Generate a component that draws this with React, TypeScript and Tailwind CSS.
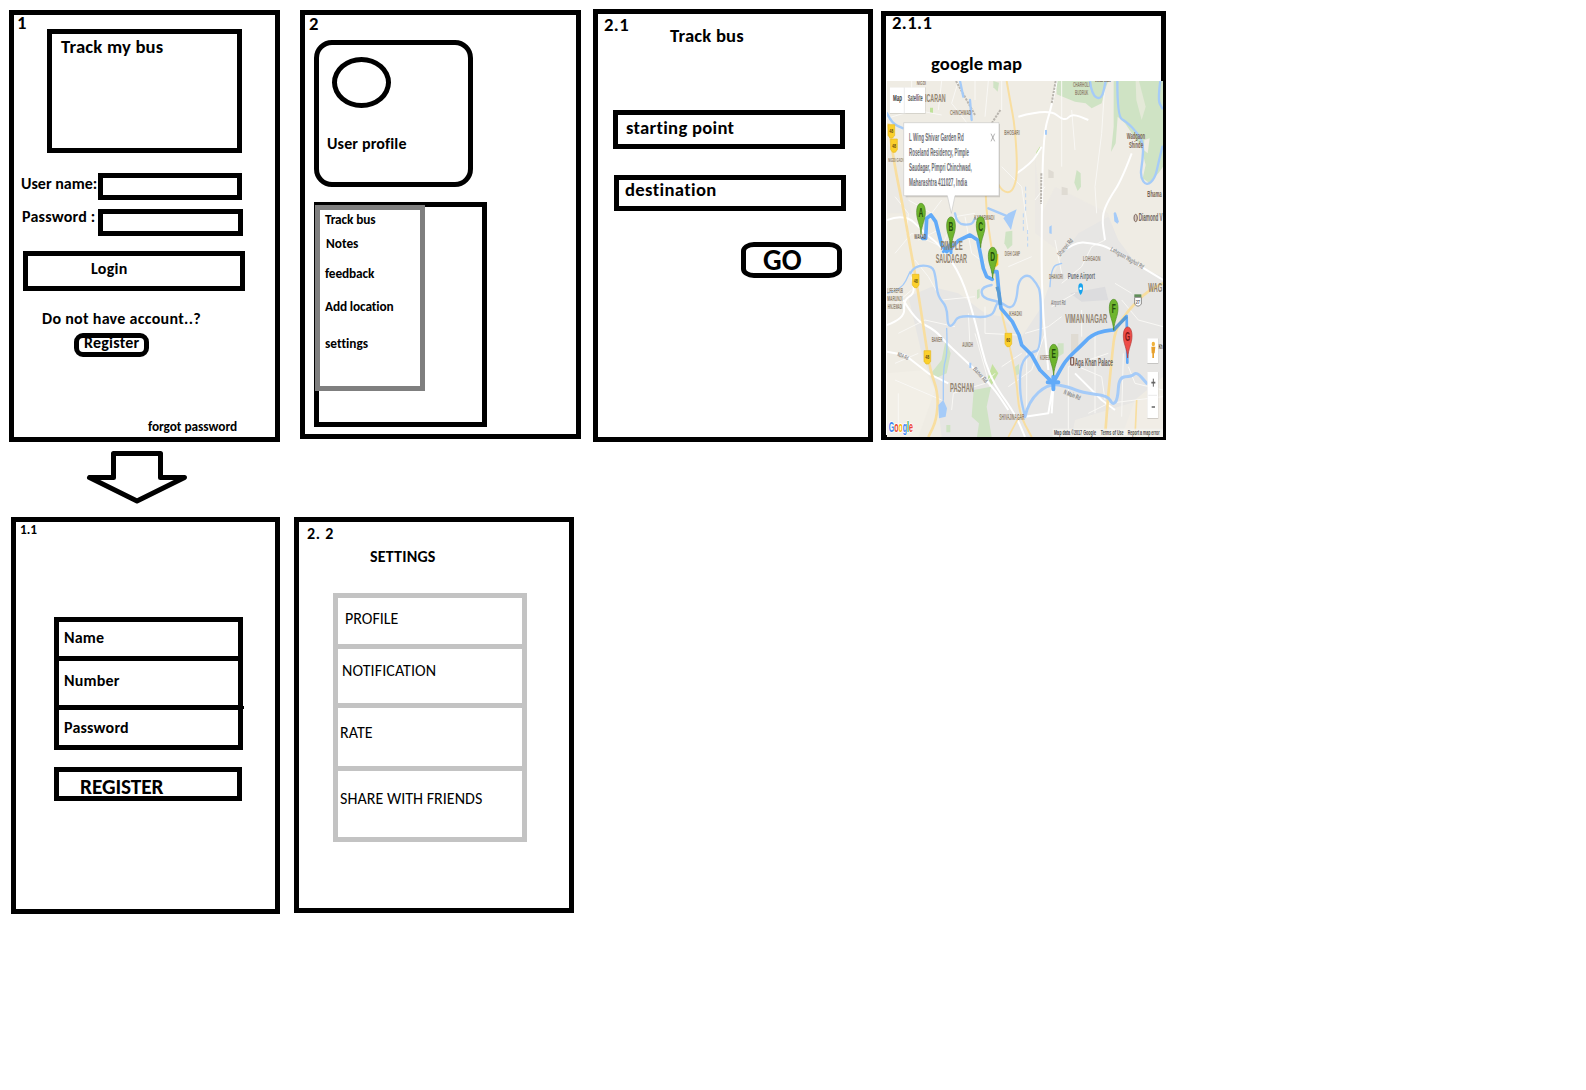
import type { ReactNode } from 'react';

function Label({ children, className }: { children: ReactNode; className: string }) {
  return <div className={`h-5 whitespace-pre leading-5 ${className}`}>{children}</div>;
}

function MapText({ x, y, w, s = 24, fill = '#91836f', children }: { x: number; y: number; w: number; s?: number; fill?: string; children: string }) {
  return (
    <text x={x} y={y} fontSize={s} fill={fill} textLength={w} lengthAdjust="spacingAndGlyphs">
      {children}
    </text>
  );
}

// Turns straight "M x y L x y ..." runs into rounded curves through the segment midpoints.
function curve(d: string) {
  return d
    .split('M')
    .filter((run) => run.trim())
    .map((run) => {
      const pts = run.split('L').map((p) => p.trim().split(/\s+/).map(Number));
      let out = `M${pts[0][0]} ${pts[0][1]}`;
      for (let i = 1; i < pts.length - 1; i++) {
        const [x, y] = pts[i];
        const [nx, ny] = pts[i + 1];
        out += `Q${x} ${y} ${(x + nx) / 2} ${(y + ny) / 2}`;
      }
      const last = pts[pts.length - 1];
      return `${out}L${last[0]} ${last[1]}`;
    })
    .join('');
}

function Pin({ x, y, letter, red }: { x: number; y: number; letter: string; red?: boolean }) {
  return (
    <g transform={`translate(${x} ${y})`}>
      <path
        d="M0 0 C-2 -30 -13 -42 -13 -66 C-13 -84 -7 -93 0 -93 C7 -93 13 -84 13 -66 C13 -42 2 -30 0 0Z"
        fill={red ? '#ee4d48' : '#6fb52e'}
        stroke={red ? '#b23a36' : '#4c8a20'}
        strokeWidth={2}
      />
      <text x={0} y={-51} fontSize={36} textAnchor="middle" fill={red ? '#7c1512' : '#234d0c'} transform="scale(0.55 1)">
        {letter}
      </text>
    </g>
  );
}

function Shield({ x, y, text }: { x: number; y: number; text: string }) {
  return (
    <g>
      <path d={`M${x - 10} ${y - 20}h20v32l-6 8h-8l-6 -8z`} fill="#fbd02c" stroke="#e6b820" strokeWidth={2} />
      <MapText x={x - 6} y={y + 6} w={12} s={17} fill="#5c4a10">{text}</MapText>
    </g>
  );
}

function RouteMap() {
  return (
    <svg className="block h-[356px] w-[276px] shrink-0" viewBox="36 243 828 1068" preserveAspectRatio="none" fontFamily="Liberation Sans, Arial, sans-serif">
      <rect x={36} y={243} width={828} height={1068} fill="#efece4" />

      {/* built-up areas */}
      <g fill="#e7e6e4">
        <path d="M100 890 L170 860 L250 880 L330 940 L380 950 L440 1010 L500 920 L525 850 L560 770 L610 700 L700 650 L730 720 L790 800 L864 830 L864 1130 L780 1200 L740 1311 L200 1311 L185 1180 L140 1060Z" />
        <path d="M480 470 L500 640 L540 560 L700 640 L720 700 L560 760 L480 700Z" opacity={0.35} />
        <path d="M36 430 L80 500 L110 640 L36 640Z" opacity={0.5} />
      </g>
      <g fill="#f2efe7">
        <path d="M36 1120 L150 1110 L180 1170 L130 1311 L36 1311Z" />
        <path d="M600 1260 L864 1180 L864 1311 L590 1311Z" opacity={0.6} />
      </g>

      {/* parks */}
      <g fill="#cfe3c4">
        <path d="M545 243 L700 243 L690 270 L680 310 L650 325 L632 310 L600 305 L545 283Z" />
        <path d="M716 243 L864 243 L864 500 L850 520 L822 548 L803 535 L812 495 L798 440 L750 370 L728 350 L722 430 L708 456 L716 380Z" />
        <path d="M605 510 L617 520 L618 560 L608 573 L598 548Z" />
        <path d="M212 1020 L227 1060 L215 1120 L185 1133 L168 1120 L200 1080Z" />
        <path d="M296 1170 L348 1160 L335 1220 L350 1311 L306 1311 L312 1270 L290 1250Z" />
        <path d="M352 1092 L370 1120 L350 1155 L338 1135Z" fill="#c5e2a0" />
        <path d="M392 695 L412 692 L412 735 L398 748 L388 730Z" />
        <path d="M548 1030h18v30l-18 12z" />
        <path d="M355 243 L372 248 L368 275 L355 262Z" />
        <path d="M420 1100l12 -8v30l-12 6z M214 1275h12v22h-12z M306 870l8 -4v26l-8 6z" />
        <path d="M165 323h9v16h-9z M484 456l12 -18v12l-12 22z" fill="#bfe19a" />
      </g>
      <path d="M782 243 L792 243 L812 320 L800 360 L784 300Z" fill="#e4e9d8" />
      <path d="M808 420 L824 415 L818 460 L806 450Z" fill="#efece4" />
      <path d="M588 1002h22v48l-22 10z M520 508l16 8v18h-16z M560 560l18 5v20h-18z" fill="#dfdbd3" />
      <path d="M585 880 L690 860 L700 900 L620 905Z" fill="#dcdcde" />

      {/* minor streets */}
      <g fill="none" stroke="#f9f8f5" strokeWidth={3}>
        <path d="M110 243V330 M200 243L190 330 M36 355L120 330L200 345 M250 243L230 310L300 400 M300 243V300 M340 243L330 350" />
        <path d="M60 760L110 700L200 740L240 650L300 640 M120 780L160 830L200 900L300 890 M40 930L110 870 M70 1000L150 960L240 980" />
        <path d="M230 1230L235 1180L330 1150L360 1120 M280 940L285 1040 M330 920V1000L430 1005 M300 1000L345 1160" />
        <path d="M450 1000L520 980L560 950 M530 920L600 880 M580 1311V1100L700 1060 M640 1240L700 1210L864 1190 M610 1100L680 1130L690 1200" />
        <path d="M400 1160L470 1110L510 1000 M380 1100L440 1060 M740 900L790 960L864 980 M720 850L770 880 M760 1100L780 1150L864 1170" />
        <path d="M560 243V500 M690 243L680 400L660 560L665 640 M590 330L600 450 M480 600L510 560 M540 720L560 820 M650 740L620 800L560 850" />
        <path d="M380 500L440 560L460 700 M400 800L470 770 M690 720L650 740 M60 1140L200 1200 M70 1180V1300 M130 1060L60 1090" />
        <path d="M380 243V330 M60 590L100 640L95 700 M270 650L290 760L330 790 M130 720L190 690 M100 600L170 640L200 600 M455 1060V1230 M620 930V1010 M660 1000V1240 M745 1060L740 1250" />
      </g>

      {/* main roads */}
      <g fill="none" stroke="#ffffff" strokeWidth={6} strokeLinejoin="round">
        <path d={curve('M36 660 L90 640 L150 700 L200 740 L260 830 L300 960 L340 1130 L420 1240 L450 1311')} />
        <path d={curve('M36 975 L90 955 L85 900 L120 880 L110 830 M85 900 L120 960 L180 990 L215 1030 L280 1090 L350 1155 L400 1230')} />
        <path d="M36 1055L90 1065L160 1120L220 1150" />
        <path d={curve('M545 243 L530 320 L505 400 L500 650 L500 900 L520 1110')} />
        <path d={curve('M425 520 L470 490 L500 440 M430 350 L520 325 L570 365 L590 340 L640 360')} />
        <path d={curve('M770 460 L740 540 L700 600 L680 650 L690 720')} />
        <path d={curve('M555 760 L600 725 L650 730 L700 740 L864 840')} />
        <path d="M450 1250L520 1240L535 1150 M535 1160L530 1240 M600 1120L680 1200L720 1230" />
      </g>
      <g fill="none" stroke="#b9b5ae" strokeWidth={6} strokeDasharray="7 3">
        <path d={curve('M243 243 L300 345 M376 330 L350 370 M542 243 L530 310 M499 520 L498 612')} />
      </g>

      {/* highways */}
      <g fill="none" stroke="#f8dea0" strokeWidth={8} strokeLinejoin="round">
        <path d={curve('M40 370 L55 480 L90 650 L105 740 L122 830 L150 1010 L165 1110 L190 1180 L185 1260 L160 1311')} />
        <path d={curve('M395 243 L405 300 L420 380 L428 520 L415 570 L395 580 L370 560 L335 470 L330 610 L355 780 L375 920 L400 1020 L425 1140 L432 1240 L470 1311')} strokeWidth={6} />
        <path d={curve('M864 850 L820 870 L760 930 L720 990 L712 1060 L700 1180 L690 1311')} />
        <path d="M785 1200L780 1311 M432 1250L400 1311" strokeWidth={5} />
      </g>

      {/* rivers and lakes */}
      <g fill="none" stroke="#a5cbf8" strokeWidth={7} strokeLinejoin="round" strokeLinecap="round">
        <path d={curve('M36 340 L50 370 L85 385 M285 300 L290 360 M255 243 L265 290')} />
        <path d={curve('M106 820 L118 797 L172 797 L182 830 L188 890 L216 920 L218 980 L235 975 L250 945 L350 955 L365 910 L375 905')} />
        <path d={curve('M350 855 L318 860 L322 895 L375 905 L408 928 L425 900 L430 840 L460 822 L485 850 L498 880 L497 1050 L470 1056 L436 1090 L434 1180 L450 1250')} />
        <path d={curve('M450 1250 L460 1205 L520 1150 L580 1160 L620 1178 L700 1187 L712 1215 L728 1200 L732 1130 L770 1130 L785 1115 L815 1150')} strokeWidth={9} />
        <path d={curve('M645 243 L650 285 L680 300 L692 243')} />
        <path d={curve('M727 243 L727 350 L755 365 L788 400 L805 430 L803 480 L795 530 L815 558 L840 535 L850 490 L862 440 M856 243 L848 300 L862 325')} />
        <path d={curve('M240 640 L245 672 L290 675 L300 655 M340 625 L400 650 M720 640 L728 665')} />
        <path d={curve('M215 985 L218 1060 L205 1100 L205 1200 M36 880 L80 870 L105 815 M525 860 L528 800 L560 790')} strokeWidth={4} />
      </g>
      <path d="M452 560V640 M458 690V740 M445 640V700" stroke="#b8d4f5" strokeWidth={3} strokeDasharray="12 8" />
      <g fill="#a5cbf8">
        <path d="M190 1215L205 1200L216 1225L212 1250L192 1255Z" />
        <path d="M385 655L400 640L425 628L415 660L408 690L395 670Z" />
        <path d="M523 680l7 -4v26l-7 -2z M510 390h6v14h-6z M716 640l12 14v18l-10 -8z M283 1088h6v16h-6z" />
      </g>

      {/* route */}
      <g fill="none" stroke="#61aaf8" strokeLinejoin="round" strokeLinecap="round">
        <path d="M142 715L152 715L155 655L168 645L182 665L200 735L215 755L228 745L250 722L285 705L308 720L317 765L325 805L335 830L352 838 M354 815L366 815L372 880L378 925L412 965L432 1005L440 1035L470 1065L495 1110L535 1150" strokeWidth={11} />
        <path d="M205 755L222 735M228 725V758" strokeWidth={9} />
        <path d={curve('M535 1148 L555 1110 L575 1078 L615 1040 L650 1005 L690 992 L716 990')} strokeWidth={11} />
        <path d="M716 990L735 970L755 948L757 1088" strokeWidth={8} />
        <path d="M535 1130V1168 M518 1147H550" strokeWidth={12} />
      </g>
      <path d="M716 990L735 970L755 950 M366 860L372 880L376 915" fill="none" stroke="#5a9bd3" strokeWidth={10} />

      {/* place names */}
      <MapText x={150} y={305} w={62} s={34}>ICARAN</MapText>
      <MapText x={125} y={254} w={28} s={15}>NIGDI</MapText>
      <MapText x={225} y={346} w={64}>CHINCHWAD</MapText>
      <MapText x={388} y={405} w={46}>BHOSARI</MapText>
      <MapText x={594} y={261} w={50} s={20}>CHARHOLI</MapText>
      <MapText x={600} y={284} w={40} s={20}>BUDRUK</MapText>
      <MapText x={660} y={247} w={48} s={15} fill="#6f5f50">Markal</MapText>
      <MapText x={755} y={417} w={55} s={29} fill="#75604f">Wadgaon</MapText>
      <MapText x={762} y={445} w={42} s={27} fill="#75604f">Shinde</MapText>
      <MapText x={817} y={592} w={43} s={28} fill="#75604f">Bhama</MapText>
      <MapText x={791} y={664} w={72} s={32} fill="#6e6660">Diamond V</MapText>
      <ellipse cx={782} cy={654} rx={5} ry={11} fill="#d9cbc4" stroke="#7a655a" strokeWidth={3} />
      <MapText x={40} y={486} w={48} s={16}>NIGDI GAON</MapText>
      <MapText x={298} y={660} w={60} s={22}>KASARWADI</MapText>
      <MapText x={118} y={717} w={36} s={20} fill="#6d6255">WAKAD</MapText>
      <MapText x={197} y={750} w={66} s={36}>PIMPLE</MapText>
      <MapText x={182} y={788} w={94} s={36}>SAUDAGAR</MapText>
      <MapText x={389} y={769} w={46} s={22}>DIGHI CAMP</MapText>
      <MapText x={37} y={880} w={47} s={22}>LIFE REPUB</MapText>
      <MapText x={37} y={903} w={45} s={22}>MARUNJI</MapText>
      <MapText x={38} y={926} w={44} s={22}>HINJEWADI</MapText>
      <MapText x={624} y={782} w={52} s={22}>LOHGAON</MapText>
      <MapText x={522} y={838} w={42} s={20}>DHANORI</MapText>
      <MapText x={578} y={836} w={82} s={28} fill="#6b6f76">Pune Airport</MapText>
      <MapText x={820} y={877} w={42} s={36}>WAG</MapText>
      <MapText x={403} y={947} w={38} s={19}>KHADKI</MapText>
      <MapText x={571} y={969} w={126} s={37}>VIMAN NAGAR</MapText>
      <MapText x={170} y={1027} w={32} s={21}>BANER</MapText>
      <MapText x={262} y={1040} w={32} s={21}>AUNDH</MapText>
      <MapText x={225} y={1175} w={72} s={36}>PASHAN</MapText>
      <MapText x={495} y={1081} w={30} s={20}>KOREG</MapText>
      <MapText x={599} y={1098} w={115} s={32} fill="#6e6660">Aga Khan Palace</MapText>
      <rect x={587} y={1073} width={9} height={22} rx={2} fill="none" stroke="#86635b" strokeWidth={4} />
      <MapText x={373} y={1260} w={75} s={25}>SHIVAJINAGAR</MapText>
      <MapText x={528} y={916} w={44} s={19} fill="#888888">Airport Rd</MapText>
      <g transform="rotate(22 68 1062)"><MapText x={68} y={1068} w={34} s={18} fill="#888888">NDA Rd</MapText></g>
      <g transform="rotate(48 298 1104)"><MapText x={298} y={1110} w={56} s={18} fill="#888888">Baner Rd</MapText></g>
      <g transform="rotate(-50 556 770)"><MapText x={556} y={770} w={62} s={20} fill="#888888">Dhanori Rd</MapText></g>
      <g transform="rotate(30 708 746)"><MapText x={708} y={752} w={112} s={19} fill="#888888">Lohegaon Wagholi Rd</MapText></g>
      <g transform="rotate(22 568 1174)"><MapText x={568} y={1182} w={52} s={20} fill="#888888">N Main Rd</MapText></g>

      <Shield x={49} y={394} text="48" />
      <Shield x={57} y={437} text="48" />
      <Shield x={122} y={843} text="48" />
      <Shield x={157} y={1072} text="48" />
      <Shield x={400} y={1020} text="60" />
      <path d="M358 762h12v32l-6 6h-6z" fill="#fbd02c" />
      <rect x={778} y={883} width={21} height={8} fill="#5e8d57" />
      <path d="M779 892h20v20l-6 6h-8l-6 -6z" fill="#ffffff" stroke="#8b8b88" strokeWidth={3} />
      <MapText x={782} y={911} w={13} s={17} fill="#666666">27</MapText>
      <path d="M617 885 C610 877 610 866 610 862 Q610 850 617 850 Q624 850 624 862 C624 868 624 877 617 885Z" fill="#18a4ee" />
      <circle cx={617} cy={866} r={4} fill="#ffffff" />

      {/* address bubble */}
      <path d="M87 372H375V592H92Z" fill="#000000" opacity={0.14} />
      <path d="M86 368H372V587H240L229 640L217 587H86Z" fill="#ffffff" stroke="#c9c9c7" strokeWidth={2} />
      <MapText x={102} y={423} w={164} s={30} fill="#6d6e74">L Wing Shivar Garden Rd</MapText>
      <MapText x={102} y={467} w={180} s={30} fill="#6d6e74">Roseland Residency, Pimple</MapText>
      <MapText x={102} y={512} w={188} s={30} fill="#6d6e74">Saudagar, Pimpri Chinchwad,</MapText>
      <MapText x={102} y={557} w={174} s={30} fill="#6d6e74">Maharashtra 411027, India</MapText>
      <path d="M348 401L359 424M359 401L348 424" stroke="#8a8a8a" strokeWidth={2} />

      {/* map type switch */}
      <rect x={44} y={262} width={108} height={80} fill="#000000" opacity={0.1} />
      <rect x={44} y={262} width={106} height={77} fill="#ffffff" />
      <path d="M88 262V339" stroke="#e2e2e2" strokeWidth={2} />
      <text x={54} y={304} fontSize={25} fontWeight={700} fill="#333333" textLength={27} lengthAdjust="spacingAndGlyphs">Map</text>
      <MapText x={98} y={304} w={45} s={25} fill="#555555">Satellite</MapText>

      <Pin x={138} y={703} letter="A" />
      <Pin x={228} y={744} letter="B" />
      <Pin x={317} y={743} letter="C" />
      <Pin x={353} y={835} letter="D" />
      <Pin x={536} y={1126} letter="E" />
      <Pin x={716} y={991} letter="F" />
      <Pin x={758} y={1074} letter="G" red />

      {/* street view and zoom controls */}
      <rect x={817} y={1016} width={33} height={76} fill="#000000" opacity={0.14} />
      <rect x={817} y={1015} width={32} height={74} fill="#ffffff" />
      <ellipse cx={835} cy={1032} rx={5} ry={7} fill="#f0b23c" />
      <path d="M829 1040h12l-2 20h-2v14h-5v-14h-2z" fill="#e7a02c" />
      <MapText x={851} y={1048} w={12} s={20} fill="#54452f">Kh</MapText>
      <rect x={817} y={1117} width={33} height={140} fill="#000000" opacity={0.14} />
      <rect x={817} y={1116} width={32} height={138} fill="#ffffff" />
      <path d="M820 1186h26" stroke="#e0e0e0" strokeWidth={2} />
      <path d="M829 1148h12M830 1221h10" stroke="#666666" strokeWidth={5} />
      <path d="M835 1136v24" stroke="#666666" strokeWidth={3} />

      {/* attribution */}
      <rect x={533} y={1286} width={331} height={25} fill="#f4f3ef" opacity={0.75} />
      <MapText x={537} y={1306} w={126} s={22} fill="#4c4c4c">Map data ©2017 Google</MapText>
      <MapText x={677} y={1306} w={69} s={22} fill="#4c4c4c">Terms of Use</MapText>
      <MapText x={758} y={1306} w={96} s={22} fill="#4c4c4c">Report a map error</MapText>
      <text x={41} y={1297} fontSize={42} fontWeight={700} stroke="#ffffff" strokeWidth={4} paintOrder="stroke" textLength={73} lengthAdjust="spacingAndGlyphs">
        <tspan fill="#4285f4">G</tspan>
        <tspan fill="#ea4335">o</tspan>
        <tspan fill="#fbbc05">o</tspan>
        <tspan fill="#4285f4">g</tspan>
        <tspan fill="#34a853">l</tspan>
        <tspan fill="#ea4335">e</tspan>
      </text>
    </svg>
  );
}

function LoginScreen() {
  return (
    <section className="mt-px flex h-[432px] w-[271px] flex-col border-[5px] border-black">
      <div className="flex pl-[3px]">
        <Label className="-mt-0.5 w-[30px] text-[18.67px]">1</Label>
        <div className="mt-[14px] h-[124px] w-[195px] border-[5px] border-black pt-[3px] pl-[9px]">
          <Label className="text-[18.67px] tracking-[0.2px]">Track my bus</Label>
        </div>
      </div>
      <div className="mt-5 flex h-[27px] pl-[7px]">
        <Label className="mt-px w-[77px] text-[16px]">User name:</Label>
        <div className="w-[144px] border-[5px] border-black" />
      </div>
      <div className="mt-[9px] flex h-[27px] pl-[7px]">
        <Label className="-mt-0.5 w-[77px] pl-px text-[16px] tracking-[0.22px]">Password :</Label>
        <div className="w-[145px] border-[5px] border-black" />
      </div>
      <div className="mt-[15px] ml-[9px] h-10 w-[222px] border-[5px] border-black pt-[3px] pl-[63px]">
        <Label className="text-[16px] tracking-[0.3px]">Login</Label>
      </div>
      <Label className="mt-[18px] pl-7 text-[16px] tracking-[0.3px]">Do not have account..?</Label>
      <div className="mt-1 ml-[60px] h-6 w-[75px] rounded-[9px] border-[5px] border-black pl-[5px]">
        <Label className="-mt-[5px] text-[16px] tracking-[0.22px]">Register</Label>
      </div>
      <Label className="mt-[60px] pl-[134px] text-[13.33px] tracking-[-0.05px]">forgot password</Label>
    </section>
  );
}

function ProfileScreen() {
  return (
    <section className="mt-px ml-5 flex h-[429px] w-[281px] flex-col border-[5px] border-black">
      <Label className="-mt-px pl-1 text-[18.67px]">2</Label>
      <div className="mt-1.5 ml-[9px] h-[147px] w-[159px] shrink-0 rounded-[18px] border-[5px] border-black">
        <div className="mt-3 ml-[13px] h-[51px] w-[59px] rounded-[50%] border-[5px] border-black" />
        <Label className="mt-[26px] pl-2 text-[16px] tracking-[0.15px]">User profile</Label>
      </div>
      <div className="mt-[15px] ml-[9px] h-[225px] w-[173px] shrink-0 border-[5px] border-black">
        <div className="-mt-0.5 -ml-1 flex h-[186px] w-[110px] flex-col border-[5px] border-[#7f7f7f] bg-white pl-[5px] text-[13.33px] tracking-[-0.13px]">
          <Label className="">Track bus</Label>
          <Label className="mt-1 pl-px tracking-normal">Notes</Label>
          <Label className="mt-[10px]">feedback</Label>
          <Label className="mt-[13px]">Add location</Label>
          <Label className="mt-[17px] tracking-normal">settings</Label>
        </div>
      </div>
    </section>
  );
}

function TrackBusScreen() {
  return (
    <section className="ml-3 flex h-[433px] w-[280px] flex-col border-[5px] border-black">
      <div className="flex pl-1.5">
        <Label className="mt-px w-[66px] text-[18.67px] tracking-[0.4px]">2.1</Label>
        <Label className="mt-3 text-[18.67px] tracking-[0.2px]">Track bus</Label>
      </div>
      <div className="mt-16 ml-[15px] h-[39px] w-[232px] border-[5px] border-black pt-[3px] pl-2">
        <Label className="text-[18.67px] tracking-[0.28px]">starting point</Label>
      </div>
      <div className="mt-[26px] ml-4 h-9 w-[232px] border-[5px] border-black pl-1.5">
        <Label className="text-[18.67px] tracking-[0.35px]">destination</Label>
      </div>
      <div className="mt-[31px] ml-[143px] h-9 w-[101px] rounded-[13px/9px] border-[5px] border-black pl-[17px]">
        <div className="-mt-0.5 h-[30px] text-[29.33px] leading-[30px]">GO</div>
      </div>
    </section>
  );
}

function MapScreen() {
  return (
    <section className="mt-0.5 ml-2 flex h-[429px] w-[285px] flex-col border-[5px] border-black">
      <Label className="-mt-[3px] pl-1.5 text-[18.67px] tracking-[0.4px]">2.1.1</Label>
      <Label className="mt-[21px] pl-[45px] text-[18.67px] tracking-[0.1px]">google map</Label>
      <div className="mt-[7px] ml-px w-[276px]">
        <RouteMap />
      </div>
    </section>
  );
}

function RegisterScreen() {
  return (
    <section className="flex h-[397px] w-[269px] flex-col border-[5px] border-black">
      <Label className="-mt-0.5 pl-1 text-[13.33px]">1.1</Label>
      <div className="relative mt-[77px] ml-[38px] h-[133px] w-[189px] border-[5px] border-black text-[16px] tracking-[0.2px]">
        <div className="h-[39px] border-b-[5px] border-black pt-1.5 pl-[5px]">
          <Label className="">Name</Label>
        </div>
        <div className="h-[49px] border-b-[5px] border-black pt-[10px] pl-[5px]">
          <Label className="">Number</Label>
        </div>
        <div className="pt-2 pl-[5px]">
          <Label className="">Password</Label>
        </div>
        <div className="absolute top-[84px] -right-1.5 h-[3px] w-px bg-black" />
      </div>
      <div className="mt-[17px] ml-[38px] h-[34px] w-[188px] border-[5px] border-black pt-[5px] pl-[21px]">
        <Label className="text-[21.33px] tracking-[-0.1px]">REGISTER</Label>
      </div>
    </section>
  );
}

function SettingsScreen() {
  return (
    <section className="ml-[14px] flex h-[396px] w-[280px] flex-col border-[5px] border-black">
      <Label className="mt-0.5 pl-2 text-[16px] tracking-[0.75px]">2. 2</Label>
      <Label className="mt-[3px] pl-[71px] text-[16px] tracking-[0.2px]">SETTINGS</Label>
      <div className="mt-[26px] ml-[34px] h-[249px] w-[194px] border-[5px] border-[#c3c3c3] text-[16px] font-normal">
        <div className="h-[51px] border-b-[5px] border-[#c3c3c3] pt-[11px] pl-[7px]">
          <Label className="">PROFILE</Label>
        </div>
        <div className="h-[59px] border-b-[5px] border-[#c3c3c3] pt-3 pl-1">
          <Label className="tracking-[0.1px]">NOTIFICATION</Label>
        </div>
        <div className="h-[63px] border-b-[5px] border-[#c3c3c3] pt-[15px] pl-0.5">
          <Label className="tracking-[0.1px]">RATE</Label>
        </div>
        <div className="pt-[18px] pl-0.5">
          <Label className="tracking-[0.03px]">SHARE WITH FRIENDS</Label>
        </div>
      </div>
    </section>
  );
}

export default function App() {
  return (
    <main className="h-[1090px] w-[1586px] overflow-hidden bg-white font-[Carlito,Calibri,Lato,sans-serif] font-bold text-black [font-variant-ligatures:none]">
      <div className="flex items-start pt-[9px] pl-[9px]">
        <LoginScreen />
        <ProfileScreen />
        <TrackBusScreen />
        <MapScreen />
      </div>
      <svg className="mt-2 ml-[86px] block h-14 w-[102px]" viewBox="86 450 102 56" fill="none" stroke="#000000" strokeWidth={5} strokeLinejoin="round">
        <path d="M113.5 453.5H160.5V477.5H184.5L137 501L89.5 477.5H113.5Z" />
      </svg>
      <div className="mt-[11px] flex items-start pl-[11px]">
        <RegisterScreen />
        <SettingsScreen />
      </div>
    </main>
  );
}
